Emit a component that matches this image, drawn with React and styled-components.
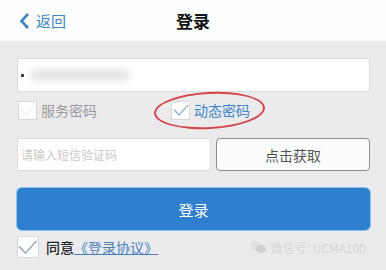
import React from "react";
import styled, { createGlobalStyle } from "styled-components";

const Global = createGlobalStyle`
  html, body { margin: 0; padding: 0; background: #ebebee; }
  body { font-family: "Noto Sans CJK SC", "Noto Sans", sans-serif; }
  * { box-sizing: border-box; }
`;

const Page = styled.div`
  width: 386px;
  height: 270px;
  background: #ebebee;
  overflow: hidden;
`;

const Header = styled.div`
  height: 41px;
  background: #fdfdfd;
  display: flex;
  align-items: center;
  position: relative;
  padding-left: 19px;
`;

const Back = styled.div`
  display: flex;
  align-items: center;
  gap: 6px;
  color: #3a86c8;
  font-size: 15px;
`;

const Title = styled.div`
  position: absolute;
  left: 0;
  right: 0;
  text-align: center;
  font-size: 17px;
  font-weight: 700;
  color: #111;
  pointer-events: none;
`;

const Body = styled.div`
  padding: 17px 16px 0 17px;
  display: flex;
  flex-direction: column;
`;

const Input = styled.div`
  height: ${(p) => p.h || 33}px;
  background: #fff;
  border: 1px solid #dcdcdc;
  border-radius: 2px;
  display: flex;
  align-items: center;
  padding-left: 3px;
  font-size: 12px;
  color: #c8c8c8;
  flex: ${(p) => p.flex || "none"};
`;

const Blur = styled.div`
  width: 100px;
  height: 12px;
  margin-left: 6px;
  border-radius: 6px;
  background: #e6e6e6;
  filter: blur(3px);
`;

const Dot = styled.div`
  width: 3px;
  height: 3px;
  background: #333;
  border-radius: 1px;
`;

const OptionsRow = styled.div`
  display: flex;
  align-items: center;
  height: 36px;
  padding-left: 1px;
  position: relative;
`;

const Option = styled.div`
  display: flex;
  align-items: center;
  gap: 4px;
  font-size: 14px;
  color: ${(p) => (p.active ? "#3a86c8" : "#9a9a9a")};
  margin-left: ${(p) => p.ml || 0}px;
`;

const Box = styled.div`
  width: ${(p) => p.s || 19}px;
  height: ${(p) => p.s || 19}px;
  background: #fff;
  border: 1px solid #d8d8d8;
  display: flex;
  align-items: center;
  justify-content: center;
`;

const Ellipse = styled.div`
  position: absolute;
  left: 137px;
  top: 0px;
  width: 111px;
  height: 37px;
  border: 2px solid #d64545;
  border-radius: 50%;
  transform: rotate(-3deg);
`;

const SmsRow = styled.div`
  display: flex;
  gap: 5px;
  margin-top: 10px;
`;

const GetButton = styled.div`
  width: 154px;
  height: 33px;
  background: #fbfcfd;
  border: 1px solid #8a8a8a;
  border-radius: 4px;
  display: flex;
  align-items: center;
  justify-content: center;
  font-size: 14px;
  color: #555;
`;

const LoginButton = styled.div`
  margin-top: 17px;
  height: 42px;
  background: #2f7fcf;
  border-radius: 5px;
  display: flex;
  align-items: center;
  justify-content: center;
  color: #fff;
  font-size: 15px;
  box-shadow: 0 0 0 1px #8cc3ea;
`;

const AgreeRow = styled.div`
  display: flex;
  align-items: center;
  margin-top: 5px;
  height: 24px;
`;

const Agree = styled.div`
  display: flex;
  align-items: center;
  font-size: 14px;
  color: #222;
  margin-left: 7px;
  font-weight: 500;
`;

const Link = styled.span`
  color: #4a7fbd;
  text-decoration: underline;
  font-weight: 400;
`;

const Watermark = styled.div`
  margin-left: auto;
  display: flex;
  align-items: center;
  gap: 5px;
  font-size: 12px;
  color: #d4d4d6;
  margin-right: 4px;
`;

const Check = ({ color = "#8fb3cc", size = 16 }) => (
  <svg width={size} height={size} viewBox="0 0 16 16" fill="none">
    <path d="M1 7.5 L6 13 L15 3" stroke={color} strokeWidth="1.2" />
  </svg>
);

export default function App() {
  return (
    <Page>
      <Global />
      <Header>
        <Back>
          <svg width="11" height="18" viewBox="0 0 11 18">
            <path d="M9 2 L2.5 9 L9 16" stroke="#3a86c8" strokeWidth="2.6" fill="none" />
          </svg>
          返回
        </Back>
        <Title>登录</Title>
      </Header>
      <Body>
        <Input h={34}>
          <Dot />
          <Blur />
        </Input>
        <OptionsRow>
          <Option>
            <Box>
              <Check color="#eeeeee" />
            </Box>
            服务密码
          </Option>
          <Option active ml={74}>
            <Box>
              <Check />
            </Box>
            动态密码
          </Option>
          <Ellipse />
        </OptionsRow>
        <SmsRow>
          <Input flex="1">请输入短信验证码</Input>
          <GetButton>点击获取</GetButton>
        </SmsRow>
        <LoginButton>登录</LoginButton>
        <AgreeRow>
          <Box s={22}>
            <Check color="#9ab" size={20} />
          </Box>
          <Agree>
            同意<Link>《登录协议》</Link>
          </Agree>
          <Watermark>
            <svg width="16" height="14" viewBox="0 0 16 14">
              <ellipse cx="6" cy="6" rx="6" ry="5" fill="#e0e0e2" />
              <ellipse cx="11" cy="9" rx="5" ry="4" fill="#d0d0d2" />
            </svg>
            微信号: UCMA100
          </Watermark>
        </AgreeRow>
      </Body>
    </Page>
  );
}
